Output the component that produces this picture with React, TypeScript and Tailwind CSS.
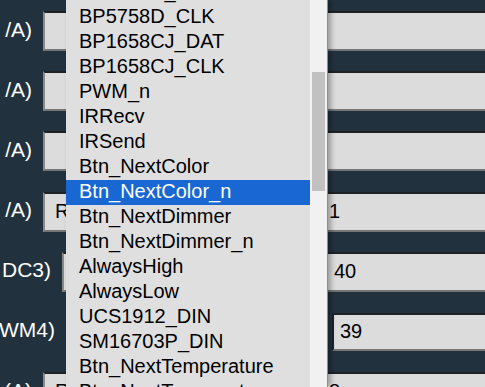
import React from "react";

const items = [
  "BP5758D_DAT",
  "BP5758D_CLK",
  "BP1658CJ_DAT",
  "BP1658CJ_CLK",
  "PWM_n",
  "IRRecv",
  "IRSend",
  "Btn_NextColor",
  "Btn_NextColor_n",
  "Btn_NextDimmer",
  "Btn_NextDimmer_n",
  "AlwaysHigh",
  "AlwaysLow",
  "UCS1912_DIN",
  "SM16703P_DIN",
  "Btn_NextTemperature",
  "Btn_NextTemperature_n",
];

const box =
  "h-[40px] bg-[#dcdcdc] border-t-2 border-t-[#1e2225] border-b-2 border-b-[#767676] border-l-2 border-l-[#8a8a8a] flex items-center text-[20px] text-black leading-none";

function Row({
  label,
  labelW,
  selectW,
  selectText,
  value,
  valuePad,
}: {
  label: string;
  labelW: string;
  selectW: string;
  selectText?: string;
  value?: string;
  valuePad: string;
}) {
  return (
    <div className="flex items-center h-[40px]">
      <div className={`${labelW} shrink-0 flex justify-end overflow-hidden whitespace-nowrap text-white text-[21px] leading-none pb-[4px]`}>
        {label}
      </div>
      <div className={`${box} ${selectW} shrink-0 ml-[11px] pl-[10px] pb-[2px] overflow-hidden whitespace-nowrap`}>
        {selectText}
      </div>
      <div className={`h-[40px] bg-[#dcdcdc] border-t-2 border-t-[#1e2225] border-b-2 border-b-[#767676] flex-1 flex items-center text-[20px] leading-none text-black pb-[2px] ${valuePad}`}>
        {value}
      </div>
    </div>
  );
}

export default function App() {
  return (
    <div
      className="relative w-[485px] h-[387px] overflow-hidden bg-[#21323e]"
      style={{ fontFamily: '"Liberation Sans", Arial, sans-serif' }}
    >
      <div className="flex flex-col pt-[11px] gap-[20.2px]">
        <Row label="/A)" labelW="w-[32px]" selectW="w-[280px]" valuePad="pl-[7px]" />
        <Row label="/A)" labelW="w-[32px]" selectW="w-[280px]" valuePad="pl-[7px]" />
        <Row label="/A)" labelW="w-[32px]" selectW="w-[280px]" valuePad="pl-[7px]" />
        <Row label="/A)" labelW="w-[32px]" selectW="w-[280px]" selectText="R" value="1" valuePad="pl-[6px]" />
        <Row label="DC3)" labelW="w-[51px]" selectW="w-[264px]" value="40" valuePad="pl-[8px]" />
        <div className="flex items-center h-[40px]">
          <div className="w-[55px] shrink-0 flex justify-end overflow-hidden whitespace-nowrap text-white text-[21px] leading-none pb-[4px]">
            WM4)
          </div>
          <div className="w-[277px] shrink-0" />
          <div className="h-[38px] flex-1 bg-[#dcdcdc] border-t-2 border-t-[#1e2225] border-l-2 border-l-[#1e2225] border-b-2 border-b-[#767676] flex items-center pl-[6px] pb-[2px] text-[20px] leading-none text-black">
            39
          </div>
        </div>
        <Row label="(A)" labelW="w-[32px]" selectW="w-[280px]" selectText="R" value="8" valuePad="pl-[6px]" />
      </div>

      <div className="absolute left-[66px] top-0 w-[262px] h-[387px] flex bg-[#dfdfdf] border-r border-r-[#8c8c8c] shadow-[3px_0_5px_rgba(0,0,0,0.3)]">
        <div className="flex-1 overflow-hidden">
          <div className="flex flex-col -mt-[20px]">
            {items.map((it, i) => (
              <div
                key={it}
                className={`h-[25px] shrink-0 pl-[13px] pb-[3px] flex items-center whitespace-nowrap text-[20px] leading-none ${
                  i === 8 ? "bg-[#1967d2] text-white" : "text-black"
                }`}
              >
                {it}
              </div>
            ))}
          </div>
        </div>
        <div className="w-[17px] shrink-0 bg-[#f1f1f1] flex flex-col pt-[72px] px-[2px]">
          <div className="h-[119px] bg-[#c1c1c1]" />
        </div>
      </div>
    </div>
  );
}
